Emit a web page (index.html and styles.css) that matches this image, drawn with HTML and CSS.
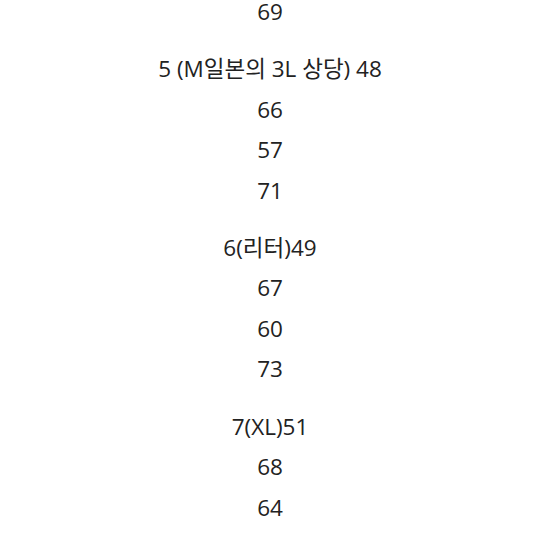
FILE: index.html
```html
<!DOCTYPE html>
<html lang="ko">
<head>
<meta charset="utf-8">
<link rel="stylesheet" href="styles.css">
</head>
<body>
<div class="page">
  <div class="group first">
    <p class="line">69</p>
  </div>
  <div class="group">
    <p class="line">5 (M일본의 3L 상당) 48</p>
    <p class="line">66</p>
    <p class="line">57</p>
    <p class="line">71</p>
  </div>
  <div class="group">
    <p class="line">6(리터)49</p>
    <p class="line">67</p>
    <p class="line">60</p>
    <p class="line">73</p>
  </div>
  <div class="group">
    <p class="line">7(XL)51</p>
    <p class="line">68</p>
    <p class="line">64</p>
    <p class="line">71</p>
  </div>
</div>
</body>
</html>
```
FILE: styles.css
```css
html, body {
  margin: 0;
  padding: 0;
  background: #ffffff;
}
.page {
  width: 540px;
  height: 540px;
  overflow: hidden;
  font-family: "Open Sans", "Noto Sans CJK KR", sans-serif;
  font-size: 22.5px;
  font-weight: 400;
  color: #222222;
  text-align: center;
}
.group {
  margin-top: 16.7px;
}
.group.first {
  margin-top: -8px;
}
.line {
  margin: 0;
  height: 40.5px;
  line-height: 40.5px;
}
```
